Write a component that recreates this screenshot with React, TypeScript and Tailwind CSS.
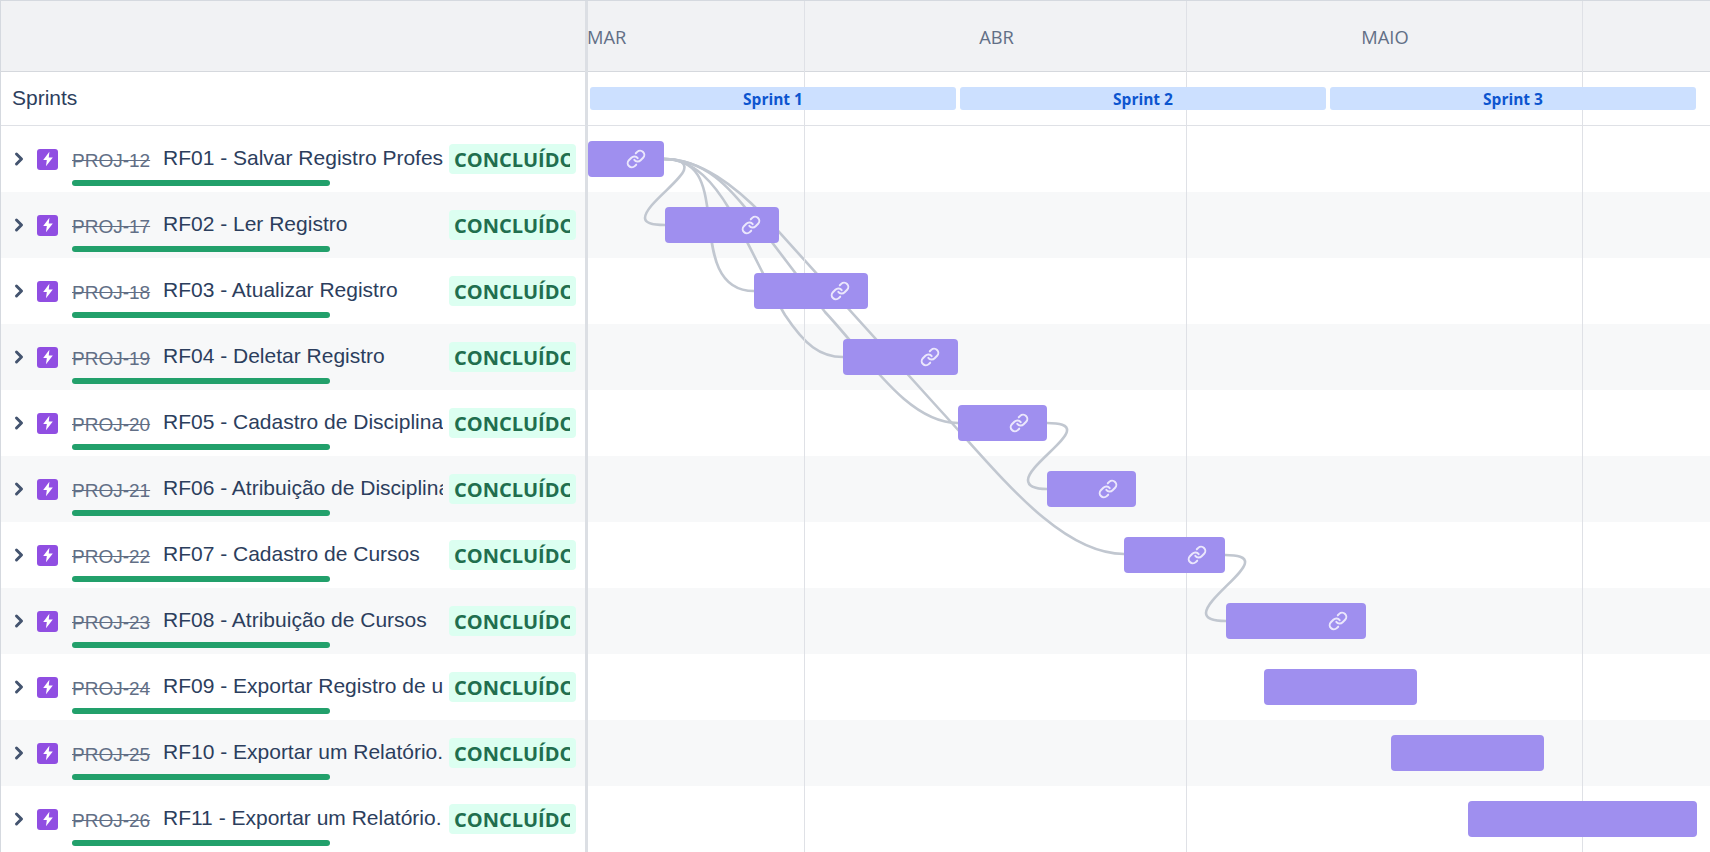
import React from 'react';
import { ChevronRight, Link } from 'lucide-react';

const ROWS = [
  { key: 'PROJ-12', title: 'RF01 - Salvar Registro Profes', left: 0, width: 76, link: true },
  { key: 'PROJ-17', title: 'RF02 - Ler Registro', left: 77, width: 114, link: true },
  { key: 'PROJ-18', title: 'RF03 - Atualizar Registro', left: 166, width: 114, link: true },
  { key: 'PROJ-19', title: 'RF04 - Deletar Registro', left: 255, width: 115, link: true },
  { key: 'PROJ-20', title: 'RF05 - Cadastro de Disciplina', left: 370, width: 89, link: true },
  { key: 'PROJ-21', title: 'RF06 - Atribuição de Disciplina', left: 459, width: 89, link: true },
  { key: 'PROJ-22', title: 'RF07 - Cadastro de Cursos', left: 536, width: 101, link: true },
  { key: 'PROJ-23', title: 'RF08 - Atribuição de Cursos', left: 638, width: 140, link: true },
  { key: 'PROJ-24', title: 'RF09 - Exportar Registro de u', left: 676, width: 153, link: false },
  { key: 'PROJ-25', title: 'RF10 - Exportar um Relatório.', left: 803, width: 153, link: false },
  { key: 'PROJ-26', title: 'RF11 - Exportar um Relatório.', left: 880, width: 229, link: false },
];

const SPRINTS = ['Sprint 1', 'Sprint 2', 'Sprint 3'];

const ARROWS = [
  'M664 159 C676 159 687 161 684 170 C680 182 645 205 645 218 C645 224 655 225 665 225',
  'M664 159 C700 159 704 185 708 212 C712 240 711 291 754 291',
  'M664 159 C695 159 715 185 730 210 C750 245 770 290 785 315 C805 345 820 357 843 357',
  'M664 159 C705 159 730 188 752 216 L825 312 C868 358 908 423 958 423',
  'M664 159 C700 159 735 185 770 222 L940 410 C1000 475 1060 554 1124 554',
  'M1047 423 C1060 423 1068 425 1067 431 C1066 442 1028 467 1028 480 C1028 487 1037 489 1047 489',
  'M1225 555 C1238 555 1246 557 1245 563 C1244 574 1206 600 1206 613 C1206 619 1215 621 1226 621',
];

function EpicIcon() {
  return (
    <span className="ml-[8px] flex h-[21px] w-[21px] shrink-0 items-center justify-center rounded-[3px] bg-[#904ee2]">
      <svg width="14" height="16" viewBox="0 0 13 15" fill="#fff">
        <path d="M7.8 0.6 L2 8.4 H5.4 L4.6 14.4 L11 6.2 H7.2 Z" />
      </svg>
    </span>
  );
}

export default function App() {
  return (
    <div className="relative h-[852px] w-[1710px] overflow-hidden border-t border-l border-[#d5d9df] bg-white font-['Liberation_Sans',sans-serif]">
      {/* month header */}
      <div className="flex h-[71px] border-b border-[#d5d8dd] bg-[#f1f2f4] font-['Open_Sans',sans-serif] text-[18.3px] text-[#626f86]">
        <div className="w-[584px] shrink-0" />
        <div className="flex w-[218px] shrink-0 items-center pt-[2px] pl-[2px]">MAR</div>
        <div className="flex w-[382px] shrink-0 items-center justify-center pt-[2px] pl-[5px]">ABR</div>
        <div className="flex w-[396px] shrink-0 items-center justify-center pt-[2px] pl-[4px]">MAIO</div>
      </div>

      {/* sprints row */}
      <div className="flex h-[54px] border-b border-[#dfe1e6]">
        <div className="flex w-[587px] shrink-0 items-center pb-[2px] pl-[11px] text-[21px] text-[#2c3e5d]">Sprints</div>
        <div className="flex items-center gap-[4px] pl-[2px]">
          {SPRINTS.map((name) => (
            <div
              key={name}
              className="relative z-10 flex h-[23px] w-[366px] items-center justify-center rounded-[3px] bg-[#cce0ff] pt-[2px] font-['Open_Sans',sans-serif] text-[15.5px] font-bold text-[#0c55cf]"
            >
              {name}
            </div>
          ))}
        </div>
      </div>

      {/* issue rows */}
      <div className="relative">
        <svg
          className="absolute top-0 left-[-1px]"
          width="1710"
          height="726"
          viewBox="0 126 1710 726"
          fill="none"
          stroke="#c1c7d0"
          strokeWidth="2.6"
        >
          {ARROWS.map((d) => (
            <path key={d} d={d} />
          ))}
        </svg>

        {ROWS.map((row, i) => (
          <div key={row.key} className={`flex h-[66px] ${i % 2 === 1 ? 'bg-[#f7f8f9]' : 'bg-white'}`}>
            <div className="flex w-[587px] shrink-0 items-center">
              <ChevronRight size={20} strokeWidth={3.6} className="ml-[8px] shrink-0 text-[#44546f]" />
              <EpicIcon />
              <div className="ml-[14px] flex h-full w-[371px] shrink-0 flex-col overflow-hidden pt-[20px]">
                <div className="flex h-[26px] items-center whitespace-nowrap">
                  <span className="mt-[4px] w-[91px] shrink-0 text-[19px] text-[#626f86] line-through">{row.key}</span>
                  <span className="mb-[3px] min-w-0 overflow-hidden text-[21px] text-[#2c3e5d]">{row.title}</span>
                </div>
                <div className="mt-[8px] h-[6px] w-[258px] rounded-full bg-[#22a06b]" />
              </div>
              <div className="ml-[6px] flex h-[30px] w-[127px] shrink-0 items-center overflow-hidden rounded-[4px] bg-[#dcfff1] pt-[2px] pr-[6px] pl-[5px] font-['Open_Sans',sans-serif] text-[20px] font-bold text-[#216e4e]">
                <span className="overflow-hidden">CONCLUÍDO</span>
              </div>
            </div>
            <div className="flex items-center">
              <div
                className="relative z-10 flex h-[36px] items-center justify-end rounded-[4px] bg-[#9f8fef] pr-[18px]"
                style={{ marginLeft: row.left, width: row.width }}
              >
                {row.link && <Link size={20} strokeWidth={2.4} className="text-[#ebe7fc]" />}
              </div>
            </div>
          </div>
        ))}
      </div>

      {/* column dividers */}
      <div className="pointer-events-none absolute inset-y-0 left-0 flex">
        <div className="w-[587px] border-r-[3px] border-[#dcdfe4]" />
        <div className="w-[217px] border-r border-[#dfe1e6]" />
        <div className="w-[382px] border-r border-[#dfe1e6]" />
        <div className="w-[396px] border-r border-[#dfe1e6]" />
      </div>
    </div>
  );
}
